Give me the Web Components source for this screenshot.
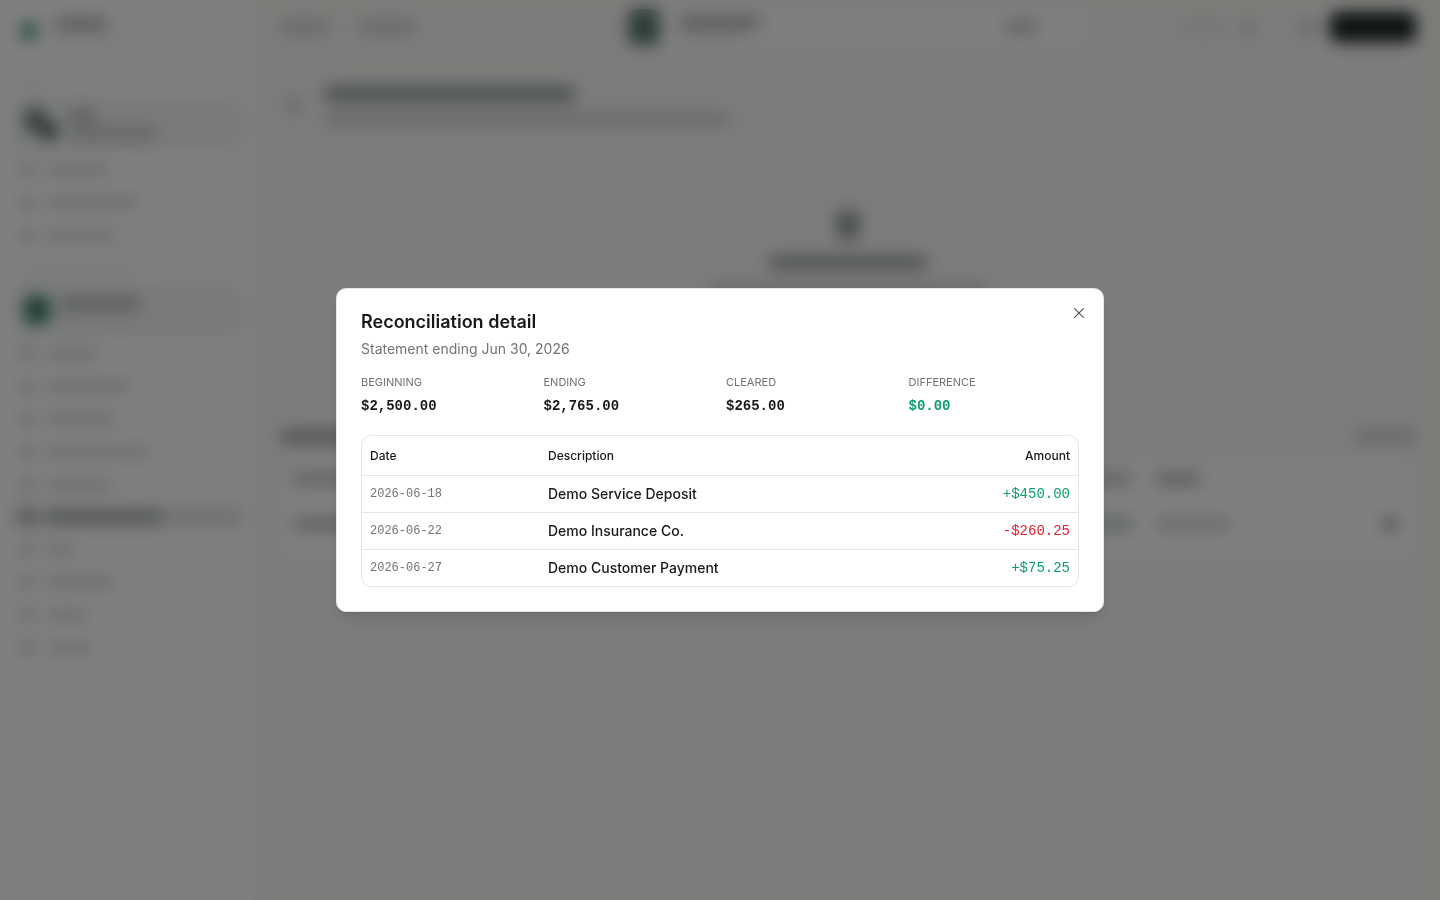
<!DOCTYPE html>
<html lang="en">
<head>
<meta charset="utf-8">
<meta name="viewport" content="width=device-width, initial-scale=1">
<title>Reconciliation detail</title>
<style>
    body {
        margin: 0;
        font-family: Inter, "Liberation Sans", sans-serif;
        font-size: 14px;
        line-height: 20px;
        color: #171a19;
        --muted: #737373;
        --line: #e5e5e5;
        --positive: #0f9d6e;
        --negative: #e0222b;
        --mono: "Liberation Mono", monospace;
    }
</style>
</head>
<body>

<app-shell inert></app-shell>

<modal-dialog heading="Reconciliation detail" description="Statement ending Jun 30, 2026">
    <stat-grid>
        <stat-item label="Beginning">$2,500.00</stat-item>
        <stat-item label="Ending">$2,765.00</stat-item>
        <stat-item label="Cleared">$265.00</stat-item>
        <stat-item label="Difference" tone="positive">$0.00</stat-item>
    </stat-grid>
    <transaction-table></transaction-table>
</modal-dialog>

<script>
// Cleared transactions listed in the dialog
const TRANSACTIONS = [
    { date: '2026-06-18', description: 'Demo Service Deposit', amount: 450.00 },
    { date: '2026-06-22', description: 'Demo Insurance Co.', amount: -260.25 },
    { date: '2026-06-27', description: 'Demo Customer Payment', amount: 75.25 }
];

// Label widths of the sidebar entries (px)
const MAIN_LINKS = [64, 92, 70];
const COMPANY_LINKS = [52, 84, 70, 104, 66, 116, 30, 70, 42, 46];
const ACTIVE_LINK = 5;

/**
 * <ghost-bar w h tone> - placeholder block used by the page behind the dialog.
 */
class GhostBar extends HTMLElement {
    constructor() {
        super();
        this.attachShadow({ mode: 'open' });
    }

    connectedCallback() {
        const w = this.getAttribute('w') || 60;
        const h = this.getAttribute('h') || 8;
        const tone = this.getAttribute('tone') || '#dcdcdb';
        this.shadowRoot.innerHTML = `
            <style>
                :host {
                    display: block;
                    flex: none;
                    width: ${w}px;
                    height: ${h}px;
                    border-radius: 8px;
                    background: ${tone};
                }
            </style>
        `;
    }
}

/**
 * <side-nav> - sidebar with brand, workspace card and two link groups.
 */
class SideNav extends HTMLElement {
    constructor() {
        super();
        this.attachShadow({ mode: 'open' });

        const link = (width, active) => `
            <a href="#" class="${active ? 'active' : ''}">
                <ghost-bar w="14" h="14" tone="${active ? '#8f9c97' : '#d0d0d0'}"></ghost-bar>
                <ghost-bar w="${width}" h="10" tone="${active ? '#98a5a0' : '#d8d8d8'}"></ghost-bar>
            </a>`;

        this.shadowRoot.innerHTML = `
            <style>
                :host {
                    display: block;
                    box-sizing: border-box;
                    padding: 18px 12px;
                    background: #fff;
                    border-right: 1px solid #f0f0ee;
                }
                .brand, .card, a { display: flex; align-items: center; }
                .brand { gap: 16px; height: 26px; padding: 0 8px; }
                .lines { display: grid; gap: 8px; }
                .caption { padding: 34px 8px 12px; }
                .card {
                    box-sizing: border-box;
                    gap: 10px;
                    height: 56px;
                    padding: 0 12px;
                    border-radius: 10px;
                    background: #f1f6f4;
                }
                nav { display: grid; grid-auto-rows: 1fr; }
                .main { height: 98px; padding-top: 2px; }
                .company { height: 326px; }
                a { gap: 12px; padding: 0 8px; border-radius: 8px; }
                a.active { background: linear-gradient(#e4e6e5, #e4e6e5) center / 100% 22px no-repeat; }
                .second { padding: 16px 8px 8px; }
                .pair { display: grid; }
                .pair > :last-child { margin: 14px 0 0 16px; }
                .pair > * { grid-area: 1 / 1; }
            </style>
            <div class="brand">
                <ghost-bar w="18" h="18" tone="#5aa384"></ghost-bar>
                <div class="lines">
                    <ghost-bar w="54" h="12" tone="#b0b4b2"></ghost-bar>
                    <ghost-bar w="110" h="6" tone="#f2f1ef"></ghost-bar>
                </div>
            </div>
            <div class="caption"><ghost-bar w="24" h="6" tone="#efeeeb"></ghost-bar></div>
            <div class="card">
                <div class="pair">
                    <ghost-bar w="22" h="24" tone="#77877f"></ghost-bar>
                    <ghost-bar w="18" h="18" tone="#55675f"></ghost-bar>
                </div>
                <div class="lines">
                    <ghost-bar w="28" h="10" tone="#a6adaa"></ghost-bar>
                    <ghost-bar w="88" h="9" tone="#b8bfbc"></ghost-bar>
                </div>
            </div>
            <nav class="main">${MAIN_LINKS.map(w => link(w)).join('')}</nav>
            <div class="second"><ghost-bar w="120" h="6" tone="#efeeeb"></ghost-bar></div>
            <div class="card">
                <ghost-bar w="26" h="28" tone="#3f7a63"></ghost-bar>
                <div class="lines">
                    <ghost-bar w="80" h="11" tone="#a9b0ad"></ghost-bar>
                    <ghost-bar w="70" h="6" tone="#e4e9e7"></ghost-bar>
                </div>
            </div>
            <nav class="company">${COMPANY_LINKS.map((w, i) => link(w, i === ACTIVE_LINK)).join('')}</nav>
        `;
    }
}

/**
 * <app-shell> - the page the dialog is opened from.
 */
class AppShell extends HTMLElement {
    constructor() {
        super();
        this.attachShadow({ mode: 'open' });
        this.shadowRoot.innerHTML = `
            <style>
                :host {
                    display: grid;
                    grid-template-columns: 256px 1fr;
                    min-height: 100vh;
                    background: #f9f8f4;
                }
                main { padding: 0 24px; }
                header {
                    display: grid;
                    grid-template-columns: 1fr 464px 328px;
                    align-items: center;
                    height: 54px;
                }
                .group { display: flex; align-items: center; gap: 28px; }
                .end { justify-content: flex-end; gap: 14px; }
                .search {
                    display: flex;
                    align-items: center;
                    gap: 18px;
                    height: 38px;
                    padding: 0 16px 0 4px;
                    border-radius: 10px;
                    background: #fff;
                }
                .search .name { flex: 1; display: grid; gap: 4px; }
                .title { display: flex; align-items: center; gap: 22px; padding: 32px 6px 0; }
                .lines { display: grid; gap: 12px; }
                .empty {
                    display: grid;
                    justify-items: center;
                    align-content: start;
                    gap: 16px;
                    height: 220px;
                    padding-top: 86px;
                }
                .bar { display: flex; justify-content: space-between; align-items: center; }
                .card {
                    display: grid;
                    gap: 31px;
                    margin-top: 18px;
                    padding: 12px 18px 26px 12px;
                    border-radius: 12px;
                    background: #fff;
                }
                .cells { display: grid; grid-template-columns: 798px 65px 1fr auto; align-items: center; }
            </style>
            <side-nav></side-nav>
            <main>
                <header>
                    <div class="group">
                        <ghost-bar w="50" h="14" tone="#d4d3d0"></ghost-bar>
                        <ghost-bar w="58" h="14" tone="#d4d3d0"></ghost-bar>
                    </div>
                    <div class="search">
                        <ghost-bar w="32" h="36" tone="#5b7c6e"></ghost-bar>
                        <div class="name">
                            <ghost-bar w="84" h="12" tone="#b0b6b3"></ghost-bar>
                            <ghost-bar w="70" h="6" tone="#e0e0e0"></ghost-bar>
                        </div>
                        <ghost-bar w="34" h="14" tone="#cbcbcb"></ghost-bar>
                        <ghost-bar w="16" h="16" tone="#f4f4f4"></ghost-bar>
                    </div>
                    <div class="group end">
                        <ghost-bar w="44" h="14" tone="#ecebe8"></ghost-bar>
                        <ghost-bar w="16" h="14" tone="#dad9d7"></ghost-bar>
                        <ghost-bar w="16" h="0"></ghost-bar>
                        <ghost-bar w="16" h="14" tone="#c8c8c5"></ghost-bar>
                        <ghost-bar w="86" h="30" tone="#1a2822"></ghost-bar>
                    </div>
                </header>
                <div class="title">
                    <ghost-bar w="16" h="16" tone="#cfcfcc"></ghost-bar>
                    <div class="lines">
                        <ghost-bar w="252" h="16" tone="#97a49f"></ghost-bar>
                        <ghost-bar w="406" h="10" tone="#c9c9c6"></ghost-bar>
                    </div>
                </div>
                <div class="empty">
                    <ghost-bar w="24" h="30" tone="#98a39e"></ghost-bar>
                    <ghost-bar w="160" h="13" tone="#98a39e"></ghost-bar>
                    <ghost-bar w="280" h="10" tone="#c9c9c6"></ghost-bar>
                </div>
                <div class="bar">
                    <ghost-bar w="130" h="13" tone="#a0aaa6"></ghost-bar>
                    <ghost-bar w="62" h="13" tone="#cfcfcc"></ghost-bar>
                </div>
                <div class="card">
                    <div class="cells">
                        <ghost-bar w="80" h="12" tone="#bfc3c1"></ghost-bar>
                        <ghost-bar w="42" h="12" tone="#bfc3c1"></ghost-bar>
                        <ghost-bar w="46" h="12" tone="#b6bab8"></ghost-bar>
                    </div>
                    <div class="cells">
                        <ghost-bar w="100" h="14" tone="#c2c6c4"></ghost-bar>
                        <ghost-bar w="44" h="14" tone="#c2cfca"></ghost-bar>
                        <ghost-bar w="76" h="12" tone="#d4d4d3"></ghost-bar>
                        <ghost-bar w="16" h="16" tone="#a9adab"></ghost-bar>
                    </div>
                </div>
            </main>
        `;
    }
}

/**
 * <modal-dialog heading description> - centred panel over a dimmed, blurred page.
 */
class ModalDialog extends HTMLElement {
    constructor() {
        super();
        this.attachShadow({ mode: 'open' });
        this.shadowRoot.innerHTML = `
            <style>
                :host {
                    position: fixed;
                    inset: 0;
                    display: grid;
                    place-items: center;
                    background: rgba(0, 0, 0, 0.5);
                    -webkit-backdrop-filter: blur(8px);
                    backdrop-filter: blur(8px);
                }
                section {
                    position: relative;
                    box-sizing: border-box;
                    width: calc(100% - 32px);
                    max-width: 768px;
                    padding: 24px;
                    border: 1px solid var(--line);
                    border-radius: 10px;
                    background: #fff;
                    box-shadow: 0 10px 15px -3px rgba(0, 0, 0, 0.1), 0 4px 6px -4px rgba(0, 0, 0, 0.1);
                }
                header { display: grid; gap: 8px; margin-bottom: 16px; }
                h2 { margin: 0; font-size: 18px; line-height: 18px; font-weight: 600; }
                p { margin: 0; color: var(--muted); }
                .body { display: grid; gap: 18px; }
                button {
                    position: absolute;
                    top: 16px;
                    right: 16px;
                    display: block;
                    padding: 0;
                    border: 0;
                    background: none;
                    color: #4d504f;
                    cursor: pointer;
                }
                svg { display: block; }
            </style>
            <section role="dialog" aria-modal="true" aria-labelledby="heading" aria-describedby="description">
                <header>
                    <h2 id="heading"></h2>
                    <p id="description"></p>
                </header>
                <div class="body"><slot></slot></div>
                <button type="button" aria-label="Close">
                    <svg width="16" height="16" viewBox="0 0 24 24" fill="none" stroke="currentColor"
                         stroke-width="1.6" stroke-linecap="round" stroke-linejoin="round">
                        <path d="M18.5 5.5 5.5 18.5"/><path d="m5.5 5.5 13 13"/>
                    </svg>
                </button>
            </section>
        `;
    }

    connectedCallback() {
        this.shadowRoot.querySelector('h2').textContent = this.getAttribute('heading');
        this.shadowRoot.querySelector('p').textContent = this.getAttribute('description');
        this.shadowRoot.querySelector('button').addEventListener('click', () => this.remove());
    }
}

class StatGrid extends HTMLElement {
    constructor() {
        super();
        this.attachShadow({ mode: 'open' });
        this.shadowRoot.innerHTML = `
            <style>
                :host { display: grid; grid-template-columns: repeat(4, 1fr); gap: 12px; }
            </style>
            <slot></slot>
        `;
    }
}

/**
 * <stat-item label tone> - caption with a monospace value below it.
 */
class StatItem extends HTMLElement {
    constructor() {
        super();
        this.attachShadow({ mode: 'open' });
        this.shadowRoot.innerHTML = `
            <style>
                :host { display: grid; gap: 6px; }
                .label {
                    font-size: 11px;
                    line-height: 14px;
                    color: var(--muted);
                    text-transform: uppercase;
                }
                .value { font-family: var(--mono); font-weight: 700; line-height: 22px; }
                :host([tone="positive"]) .value { color: var(--positive); }
            </style>
            <div class="label"></div>
            <div class="value"><slot></slot></div>
        `;
    }

    connectedCallback() {
        this.shadowRoot.querySelector('.label').textContent = this.getAttribute('label');
    }
}

/**
 * <transaction-table> - dates, descriptions and signed amounts.
 */
class TransactionTable extends HTMLElement {
    constructor() {
        super();
        this.attachShadow({ mode: 'open' });
    }

    connectedCallback() {
        const rows = TRANSACTIONS.map(t => `
            <tr>
                <td class="date">${t.date}</td>
                <td class="description">${t.description}</td>
                <td class="amount ${t.amount < 0 ? 'negative' : 'positive'}">${this._format(t.amount)}</td>
            </tr>`).join('');

        this.shadowRoot.innerHTML = `
            <style>
                :host {
                    display: block;
                    border: 1px solid var(--line);
                    border-radius: 10px;
                    overflow: hidden;
                }
                table { width: 100%; border-collapse: separate; border-spacing: 0; table-layout: fixed; }
                th, td { padding: 8px; text-align: left; }
                th { height: 23px; font-size: 12px; line-height: 16px; font-weight: 500; }
                th, tr:not(:last-child) td { border-bottom: 1px solid var(--line); }
                th:first-child { width: 162px; }
                th:last-child { width: 140px; }
                th:last-child, .amount { text-align: right; }
                .date { font-family: var(--mono); font-size: 12px; color: var(--muted); }
                .description { font-weight: 500; }
                .amount { font-family: var(--mono); font-weight: 500; }
                .positive { color: var(--positive); }
                .negative { color: var(--negative); }
            </style>
            <table>
                <thead>
                    <tr><th scope="col">Date</th><th scope="col">Description</th><th scope="col">Amount</th></tr>
                </thead>
                <tbody>${rows}</tbody>
            </table>
        `;
    }

    _format(amount) {
        return `${amount < 0 ? '-' : '+'}$${Math.abs(amount).toFixed(2)}`;
    }
}

customElements.define('ghost-bar', GhostBar);
customElements.define('side-nav', SideNav);
customElements.define('app-shell', AppShell);
customElements.define('modal-dialog', ModalDialog);
customElements.define('stat-grid', StatGrid);
customElements.define('stat-item', StatItem);
customElements.define('transaction-table', TransactionTable);
</script>
</body>
</html>
